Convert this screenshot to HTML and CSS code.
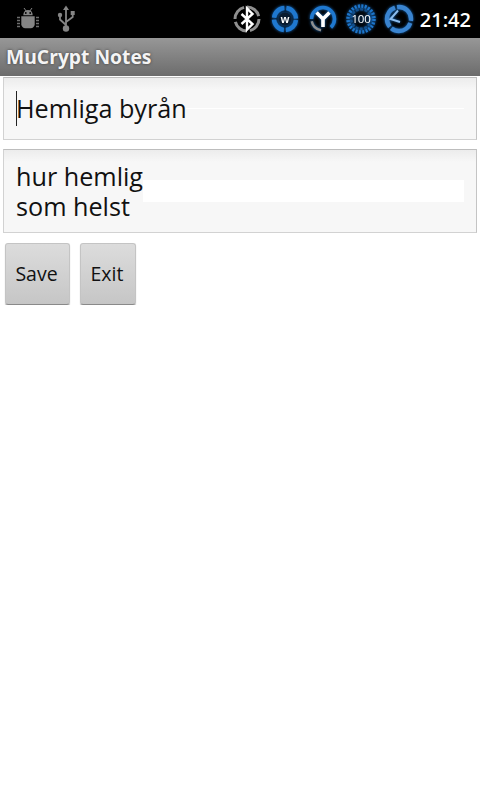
FILE: index.html
```html
<!DOCTYPE html>
<html lang="en">
<head>
    <meta charset="UTF-8">
    <meta name="viewport" content="width=device-width, initial-scale=1.0">
    <title>MuCrypt Notes</title>
    <link rel="stylesheet" href="styles.css">
</head>
<body>
    <div class="status-bar">
        <svg class="icon-bug" width="24" height="24" viewBox="0 0 24 24">
            <path d="M8 1l2.500 3.500M16 1l-2.500 3.500" stroke="#858585" stroke-width="1" fill="none"/>
            <path d="M7.300 8.300c0-3.500 2-5.300 4.700-5.300s4.700 1.800 4.700 5.300z" fill="#858585"/>
            <path d="M5.300 9.300h13.400v8c0 2.200-1.800 4-4 4H9.300c-2.200 0-4-1.800-4-4z" fill="#858585"/>
            <path d="M1 10.500h3M1 13.500h3M1 16.500h3M1 19.500h3M20 10.500h3M20 13.500h3M20 16.500h3M20 19.500h3" stroke="#6e6e6e" stroke-width="1.300" fill="none"/>
            <circle cx="9.800" cy="6" r="0.900" fill="#000"/>
            <circle cx="14.200" cy="6" r="0.900" fill="#000"/>
        </svg>
        <svg class="icon-usb" width="20" height="28" viewBox="0 0 20 28">
            <path d="M10 3v20M10 20l-6-5.500V10M10 17l6.700-5V8" stroke="#858585" stroke-width="1.800" fill="none"/>
            <path d="M10 0.500l3 4.500H7z" fill="#858585"/>
            <circle cx="4" cy="10" r="2.200" fill="#858585"/>
            <rect x="14.700" y="6" width="4" height="4" fill="#858585"/>
            <circle cx="10" cy="23.500" r="3.200" fill="#858585"/>
        </svg>
        <div class="status-right">
            <svg width="38" height="38" viewBox="0 0 38 38">
                <circle cx="19" cy="19" r="12" fill="none" stroke="#8f8f8f" stroke-width="3" pathLength="100" stroke-dasharray="21 4"/>
                <path d="M13.500 14l11 10-5.500 5.500V8.500l5.500 5.500-11 10" fill="none" stroke="#fff" stroke-width="2.400"/>
            </svg>
            <svg class="icon-glow" width="38" height="38" viewBox="0 0 38 38">
                <circle cx="19" cy="19" r="11" fill="none" stroke="#1f78cf" stroke-width="4.500" stroke-dasharray="15.300 2" stroke-dashoffset="-1"/>
                <circle cx="19" cy="19" r="6.500" fill="#0a1c30"/>
                <text x="19" y="22.500" class="icon-letter">w</text>
            </svg>
            <svg class="icon-glow" width="38" height="38" viewBox="0 0 38 38">
                <circle cx="19" cy="19" r="11.500" fill="none" stroke="#1f78cf" stroke-width="3.500" pathLength="100" stroke-dasharray="63 37" transform="rotate(180 19 19)"/>
                <circle cx="19" cy="19" r="11.500" fill="none" stroke="#8f8f8f" stroke-width="2.500" pathLength="100" stroke-dasharray="19 81" transform="rotate(100 19 19)"/>
                <path d="M12.500 12.500L19 19l6.500-6.500M19 19v8" fill="none" stroke="#fff" stroke-width="3.600"/>
            </svg>
            <svg class="icon-glow" width="38" height="38" viewBox="0 0 38 38">
                <circle cx="19" cy="19" r="13" fill="none" stroke="#1d76cc" stroke-width="3.500" stroke-dasharray="2 1.400"/>
                <circle cx="19" cy="19" r="9.800" fill="none" stroke="#124f8c" stroke-width="2.500" stroke-dasharray="3 1.500"/>
                <text x="19" y="23" class="icon-number">100</text>
            </svg>
            <svg class="icon-glow" width="38" height="38" viewBox="0 0 38 38">
                <circle cx="19" cy="19" r="12" fill="none" stroke="#3a84d0" stroke-width="4.500" stroke-dasharray="23 2.100" stroke-dashoffset="-4"/>
                <path d="M18 10.500L10.500 19l9.500 3" fill="none" stroke="#8cbdee" stroke-width="2"/>
            </svg>
            <span class="clock">21:42</span>
        </div>
    </div>

    <div class="title-bar">MuCrypt Notes</div>

    <div class="fields">
        <div class="field field-title">
            <span class="stripe stripe-thin"></span>
            <span class="cursor"></span>
            <span class="field-text">Hemliga byrån</span>
        </div>
        <div class="field field-body">
            <span class="stripe stripe-wide"></span>
            <span class="field-text">hur hemlig<br>som helst</span>
        </div>
    </div>

    <div class="buttons">
        <button class="btn btn-save">Save</button>
        <button class="btn btn-exit">Exit</button>
    </div>
</body>
</html>
```

FILE: styles.css
```css
* {
    box-sizing: border-box;
}
body {
    margin: 0;
    background-color: #fff;
    font-family: "Open Sans", "Noto Sans", sans-serif;
    color: #111;
}
.status-bar {
    height: 38px;
    background-color: #000;
    display: flex;
    align-items: center;
    padding-left: 16px;
}
.icon-usb {
    margin-left: 16px;
}
.status-right {
    margin-left: auto;
    display: flex;
    align-items: center;
    padding-right: 9px;
}
.icon-glow {
    filter: drop-shadow(0 0 1.500px #1667b8);
}
.icon-letter {
    font-family: "Liberation Sans", sans-serif;
    font-size: 11px;
    font-weight: bold;
    fill: #fff;
    text-anchor: middle;
}
.icon-number {
    font-family: "Open Sans", sans-serif;
    font-size: 11.500px;
    fill: #fff;
    text-anchor: middle;
    letter-spacing: -0.300px;
}
.clock {
    color: #fff;
    font-size: 20px;
    font-weight: 600;
    margin-left: 2px;
}
.title-bar {
    height: 38px;
    background: linear-gradient(#979797, #6c6c6c);
    color: #f4f4f4;
    font-size: 19.300px;
    font-weight: 700;
    line-height: 38px;
    padding-left: 6px;
    text-shadow: 0 0 3px #3c3c3c;
}
.fields {
    padding: 1px 3px 0;
    display: flex;
    flex-direction: column;
    gap: 9px;
}
.field {
    position: relative;
    background: linear-gradient(#ececec, #f7f7f7 12px);
    border: 1px solid #d2d2d2;
    border-top-color: #bdbdbd;
    border-right-color: #c4c4c4;
    padding-left: 12px;
    font-size: 25.200px;
}
.field-title {
    height: 63px;
    display: flex;
    align-items: center;
    padding-bottom: 2px;
}
.field-body {
    height: 84px;
    padding-top: 11px;
    line-height: 30px;
}
.field-text {
    position: relative;
}
.cursor {
    position: absolute;
    left: 12px;
    top: 13px;
    width: 1px;
    height: 35px;
    background-color: #222;
}
.stripe {
    position: absolute;
    background-color: #fff;
    right: 12px;
}
.stripe-thin {
    left: 182px;
    top: 30px;
    height: 1px;
}
.stripe-wide {
    left: 139px;
    top: 30px;
    height: 22px;
}
.buttons {
    display: flex;
    gap: 10px;
    padding: 10px 0 0 5px;
}
.btn {
    height: 62px;
    font-family: inherit;
    font-size: 19.500px;
    color: #111;
    padding: 0 2px 2px 0;
    background: linear-gradient(#dcdcdc, #c6c6c6);
    border: 1px solid #c4c4c4;
    border-bottom: 1px solid #8a8a8a;
    border-radius: 3px;
    box-shadow: 0 1px 1px #bbb;
}
.btn-save {
    width: 65px;
}
.btn-exit {
    width: 56px;
}
```
